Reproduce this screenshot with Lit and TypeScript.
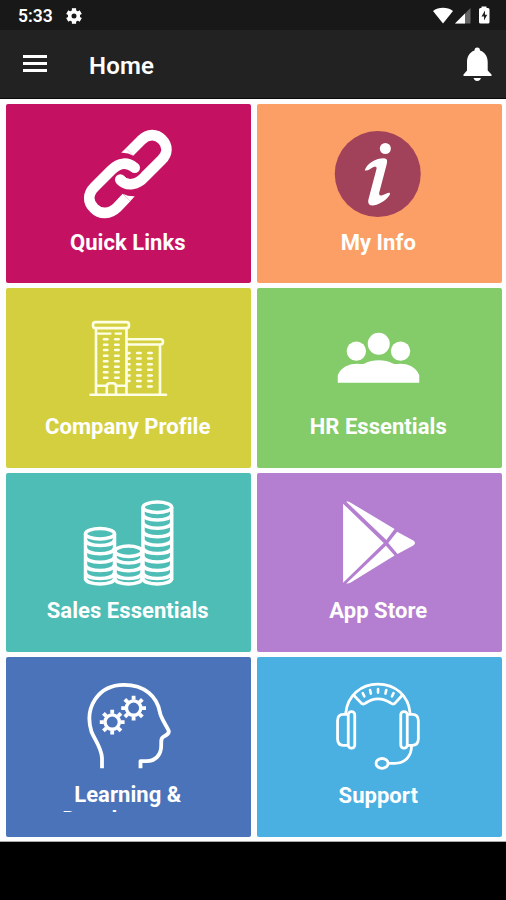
import { LitElement, html, css, svg } from "lit";
import { customElement, property } from "lit/decorators.js";

const gear = (cx: number, cy: number) => svg`
  <circle cx=${cx} cy=${cy} r="7.2" stroke-width="3.4"/>
  ${[0, 45, 90, 135, 180, 225, 270, 315].map(
    (a) => svg`<path d="M${cx} ${cy - 8.4}v-4" stroke-width="3.8" stroke-linecap="butt" transform="rotate(${a} ${cx} ${cy})"/>`
  )}`;

const coins = (x: number, w: number, tops: number[]) => svg`
  <ellipse cx=${x + w / 2} cy=${tops[0]} rx=${w / 2} ry="5.2"/>
  <path d="M${x} ${tops[0]}V579.5M${x + w} ${tops[0]}V579.5"/>
  ${tops.slice(1).map((y) => svg`<path d="M${x} ${y - 1}C${x + 2} ${y + 6} ${x + w - 2} ${y + 6} ${x + w} ${y - 1}"/>`)}
  <path d="M${x} 578.5C${x + 1} 585.6 ${x + w - 1} 585.6 ${x + w} 578.5"/>`;

const dashes = (xs: number[], ys: number[]) =>
  ys.map((y) => xs.map((x) => svg`<path d="M${x} ${y}h3.4" stroke-width="2.5"/>`));

const icons: Record<string, unknown> = {
  link: svg`<svg viewBox="78.5 124 100 100" fill="none" stroke="#fff" stroke-width="10.6">
    <path d="M129 152L141 140C147.500 133.500 156 133.700 161.500 139.500C167.500 145.500 167.500 153.500 161 160L144.500 176.500C137 185 126.500 187 119.800 179.800"/>
    <path d="M120.700 152.700L125.300 148.300L132.700 155.700Q127.500 152.300 120.700 152.700Z" fill="#fff" stroke="none"/>
    <circle cx="119.800" cy="179.500" r="5.300" fill="#fff" stroke="none"/>
    <path d="M126 197.500L116.500 207.500C109.500 214.500 99.500 214.500 93.700 208.500C87 202 87 194 94 187L111 170C119 162 127 162 133.800 167.500"/>
    <path d="M122.300 193.800Q127.500 196.600 134.300 196.300L129.700 201.200Z" fill="#fff" stroke="none"/>
    <circle cx="134.200" cy="167.800" r="5.300" fill="#fff" stroke="none"/>
  </svg>`,
  info: svg`<svg viewBox="329.25 124 100 100" fill="#fff">
    <circle cx="378" cy="174" r="43" fill="#a1425a"/>
    <circle cx="385.600" cy="148.500" r="5.500"/>
    <path d="M365 170.500C367 163.500 375 158.500 384 158.200C387.500 158.300 387.800 160.500 387 164L379.500 192.500C379 195 380 196 382.500 195.200C385.500 194.200 387.500 192.500 389.800 192.700C390.800 193.500 390 195 389 196.300C385.500 201 378 205.500 372.500 205.500C368.800 205.300 367.900 202.500 368.800 199L376.800 168.800C377.200 166.600 375.800 166.300 373.800 167C371 168 368.500 171.200 365 170.500Z"/>
  </svg>`,
  buildings: svg`<svg viewBox="79 308.2 100 100" fill="none" stroke="#ffffe6" stroke-width="2.600" stroke-linecap="round" stroke-linejoin="round">
    <rect x="93" y="322.300" width="36" height="6" rx="2.600"/>
    <path d="M96 328.500V394M126.500 328.500V394M129 339.500H160.500Q163 339.500 163 342Q163 344.700 160.500 344.700H128M160 345V394M90.500 395H166"/>
    <path d="M98 333.800h12.500M115.500 333.800h5.500" stroke-width="2.200"/>
    ${dashes([104, 115.2], [339.5, 345, 350.3, 356, 361.5, 367, 372.5, 378])}
    ${dashes([137.2, 148.3], [353.3, 358.8, 364.5, 370, 375.7, 381.2, 386.6])}
    ${[353.3, 358.8, 364.5, 370, 375.7, 381.2].map((y) => svg`<path d="M128 ${y}h1.500"/>`)}
    <path d="M97 386H105.500M117 386H126M106.800 394V386.500Q106.800 383.500 110 383.500H113Q116 383.500 116 386.500V394"/>
  </svg>`,
  people: svg`<svg viewBox="329.25 308.2 100 100" fill="#fff">
    <circle cx="379" cy="344" r="11"/><circle cx="356.600" cy="351.300" r="9.700"/><circle cx="400.800" cy="351.300" r="9.700"/>
    <path d="M338 383V375.500C341.500 367 349.500 364 357.500 364C360.500 364 363 364.800 364.800 363.700C373 359.500 385 359.500 393.200 363.700C395 364.800 397.500 364 400.500 364C408.500 364 416 367 419.500 375.500V383Z"/>
  </svg>`,
  coins: svg`<svg viewBox="78.5 492.800 100 100" fill="none" stroke="#fff" stroke-width="3.500">
    ${coins(85, 29, [533.5, 541, 549.3, 557.7, 566, 574])}
    ${coins(114.5, 27, [551, 558.5, 566.3, 574])}
    ${coins(142.5, 28.7, [507, 515.5, 523.8, 532.3, 540.7, 549, 557.5, 566, 574])}
  </svg>`,
  play: svg`<svg viewBox="329.25 492.800 100 100" fill="#fff">
    <path d="M343.300 503.500L384 542.800L343.300 582.500Z"/>
    <path d="M346.500 501.500Q348.500 501 351 502.500L394.800 528.800L386.600 539.700Z"/>
    <path d="M397.400 531.500L413.500 540.200Q417 542.800 413.500 545.300L397.800 553.800L388.500 542.800Z"/>
    <path d="M386.200 545.500L394.800 555.400L351 582.200Q348.500 583.800 346.500 583.200Z"/>
  </svg>`,
  head: svg`<svg viewBox="79 677.2 100 100" fill="none" stroke="#fff" stroke-width="3.800" stroke-linejoin="round">
    <path d="M102 768.500V758C101.500 748 95 740.500 91.500 732C84 708 98 685 124 685C145 685 157 697 159.800 712C160.500 718 165.500 724 168.500 730.500C169.800 733.500 167 735 163 737.300C161 738.500 161.200 741 161.200 746C161.200 755 155.500 761.300 146.500 761.300H140.500V768.500"/>
    ${gear(112.2, 722.3)}${gear(133.6, 708.3)}
  </svg>`,
  headset: svg`<svg viewBox="329.25 677.2 100 100" fill="none" stroke="#fff" stroke-width="2.800" stroke-linejoin="round" stroke-linecap="round">
    <path d="M346 713C348 696 361 684.300 378 684.300C396 684.300 408.500 696 410.300 713"/>
    <path d="M354 695.500L362 703.800Q364 704.800 366 703.200Q378 694.800 391 703.200Q393 704.800 394.800 703.800L402.500 695.500"/>
    <path d="M363 693.400l1.600 3.200M370.300 690.300l.8 3.500M378.300 689.200v3.600M386.500 690.300l-.8 3.500M393.800 693.400l-1.600 3.200" stroke-width="2.600"/>
    <rect x="348.500" y="711.800" width="6.500" height="36.500" rx="3"/><rect x="401" y="711.800" width="6.500" height="36.500" rx="3"/>
    <path d="M348 714.500H343.500Q337.800 714.500 337.800 721V739Q337.800 745.500 343.500 745.500H348M408 714.500H412.500Q418.600 714.500 418.600 721V739Q418.600 745.500 412.500 745.500H408"/>
    <path d="M411.800 746.500C411.500 757 405 763.600 395 763.600H389"/>
    <ellipse cx="382.300" cy="763.600" rx="6" ry="4.900"/>
  </svg>`,
};

@customElement("menu-tile")
class MenuTile extends LitElement {
  @property() icon = "";
  @property() label = "";
  static styles = css`
    :host { display: flex; flex-direction: column; align-items: center; padding-top: 20px; box-sizing: border-box; border-radius: 2px; min-width: 0; overflow: hidden; }
    svg { display: block; width: 100px; height: 100px; flex: none; }
    .label { width: 220px; max-height: 35.500px; margin: 5.500px 1.500px 0 0; overflow: hidden; color: #fff; font: 700 22px/25.500px Roboto, sans-serif; letter-spacing: 0.05px; text-align: center; }
    :host([wrapped]) .label { width: 150px; margin-top: 4.500px; max-height: 30.800px; }
  `;
  render() {
    return html`${icons[this.icon]}<div class="label">${this.label}</div>`;
  }
}

@customElement("app-root")
class AppRoot extends LitElement {
  static styles = css`
    :host { display: flex; flex-direction: column; width: 506px; height: 900px; background: #000; font-family: Roboto, sans-serif; color: #fff; overflow: hidden; }
    .status { height: 30px; box-sizing: border-box; display: flex; align-items: center; background: #181818; padding: 2px 15px 0 18px; }
    .time { width: 47px; font-size: 17.500px; font-weight: 600; line-height: 28px; }
    .signals { margin-left: auto; }
    svg { display: block; }
    .bar { height: 69px; box-sizing: border-box; border-bottom: 1.500px solid #0a0a0a; display: flex; align-items: center; background: #222; padding: 0 14px 0 23px; }
    h1 { margin: 3px 0 0 42px; font-size: 24px; line-height: 30px; font-weight: 600; letter-spacing: 0.2px; }
    .bell { margin-left: auto; }
    .grid { height: 743px; box-sizing: border-box; padding: 5px 4.500px 4.200px 6px; display: grid; grid-template-columns: 245px 245px; grid-template-rows: repeat(4, 179.400px); gap: 5px 5.500px; background: #fdfdfd; border-bottom: 1px solid #aaa; }
    .pink { background: #c51162; }
    .orange { background: #fc9f66; }
    .olive { background: #d3cf3f; }
    .green { background: #84cb69; }
    .teal { background: #4dbdb6; }
    .purple { background: #b47fd0; }
    .blue { background: #4b73ba; }
    .sky { background: #4aafe1; }
  `;
  render() {
    return html`
      <div class="status">
        <span class="time">5:33</span>
        <svg width="18" height="18" viewBox="0 0 18 18" fill="none" stroke="#fff">
          <circle cx="9" cy="9" r="4.300" stroke-width="3.600"/>
          ${[0, 60, 120, 180, 240, 300].map((a) => svg`<path d="M9 4V1.200" stroke-width="4.200" transform="rotate(${a} 9 9)"/>`)}
        </svg>
        <svg class="signals" width="60" height="20" viewBox="431 5 60 20" fill="#fff">
          <path d="M433 10C438.500 5.800 447.500 5.800 453 10L443 22.500Z"/>
          <path d="M470.500 7V22.500H455Z" fill="#666"/><path d="M465 12.500V22.500H455Z"/>
          <path d="M481.500 7V5.500h5V7H488Q489.500 7 489.500 8.500V21Q489.500 22.500 488 22.500H480.500Q479 22.500 479 21V8.500Q479 7 480.500 7Z"/>
          <path d="M485 9.500L481.500 15.500H484V19.500L487.300 13.700H485Z" fill="#222"/>
        </svg>
      </div>
      <header class="bar">
        <svg width="24" height="18" viewBox="0 0 24 18" fill="#fff"><path d="M0 0h24v3H0zM0 7h24v3H0zM0 14h24v3H0z"/></svg>
        <h1>Home</h1>
        <svg class="bell" width="29" height="34" viewBox="463 47 29 34" fill="#fff">
          <path d="M474.500 50.500Q474.500 47.500 477.200 47.500Q480 47.500 480 50.500C485.500 52.500 487.700 57 487.700 62V70.500L491.500 74.500V76H463.500V74.500L467 70.500V62C467 57 469 52.500 474.500 50.500Z"/>
          <path d="M473.500 78H481Q480 81 477.200 81Q474.500 81 473.500 78Z"/>
        </svg>
      </header>
      <main class="grid">
        <menu-tile class="pink" icon="link" label="Quick Links"></menu-tile>
        <menu-tile class="orange" icon="info" label="My Info"></menu-tile>
        <menu-tile class="olive" icon="buildings" label="Company Profile"></menu-tile>
        <menu-tile class="green" icon="people" label="HR Essentials"></menu-tile>
        <menu-tile class="teal" icon="coins" label="Sales Essentials"></menu-tile>
        <menu-tile class="purple" icon="play" label="App Store"></menu-tile>
        <menu-tile class="blue" wrapped icon="head" label="Learning &amp; Development"></menu-tile>
        <menu-tile class="sky" icon="headset" label="Support"></menu-tile>
      </main>`;
  }
}
